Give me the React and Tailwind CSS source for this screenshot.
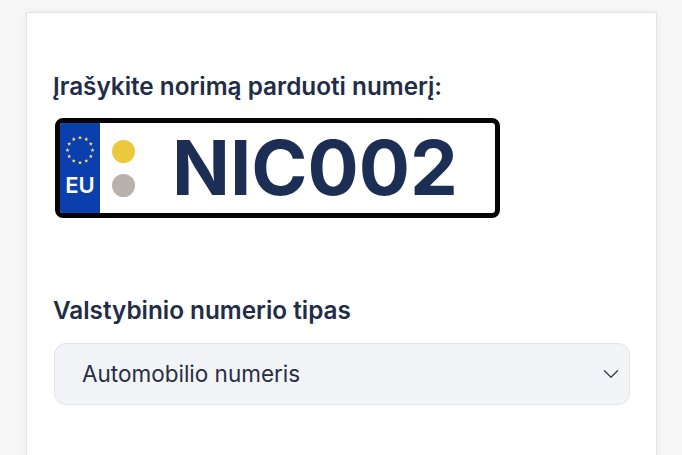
import React from 'react';
import { ChevronDown } from 'lucide-react';

const STARS = Array.from({ length: 12 }, (_, i) => {
  const a = (i * Math.PI) / 6;
  return { x: 16 + 12.5 * Math.sin(a), y: 16 - 12.5 * Math.cos(a) };
});

const EuStars = () => (
  <svg width="32" height="32" viewBox="0 0 32 32" className="block">
    {STARS.map((s, i) => (
      <polygon
        key={i}
        transform={`translate(${s.x} ${s.y}) scale(1.25)`}
        fill="#f3e36a"
        points="0,-1.7 0.5,-0.5 1.7,-0.5 0.7,0.3 1.1,1.5 0,0.8 -1.1,1.5 -0.7,0.3 -1.7,-0.5 -0.5,-0.5"
      />
    ))}
  </svg>
);

const Plate = ({ number }) => (
  <div className="flex w-[445px] h-[100px] border-[5px] border-[#050505] rounded-lg bg-white overflow-hidden">
    <div className="w-[40px] bg-[#0b3fae] flex flex-col items-center pt-[11px]">
      <EuStars />
      <span className="mt-[7px] text-[22px] leading-[24px] font-semibold text-white">EU</span>
    </div>
    <div className="w-[46px] flex flex-col items-center pt-[17px] gap-[11px]">
      <div className="w-[23px] h-[23px] rounded-full bg-[#ecc83c]" />
      <div className="w-[23px] h-[23px] rounded-full bg-[#b8b2ae]" />
    </div>
    <div className="pl-[26px] text-[76px] leading-[89px] font-bold text-[#1c2e54]">{number}</div>
  </div>
);

export default function App() {
  return (
    <div className="h-[455px] overflow-hidden bg-[#f7f7f7] pt-[12px] pl-[26px] font-['Inter',sans-serif]">
      <div className="w-[631px] h-[460px] bg-white border border-[#e3e3e3] shadow-[0_0_10px_rgba(0,0,0,0.05)] px-[27px] pt-[56px]">
        <h2 className="-ml-[1px] text-[24.3px] leading-[34px] font-semibold text-[#1f2d47] mb-[15px]">Įrašykite norimą parduoti numerį:</h2>
        <div className="ml-[1px]"><Plate number="NIC002" /></div>
        <h2 className="-ml-[1px] mt-[75px] text-[24.3px] leading-[34px] font-semibold text-[#1f2d47]">Valstybinio numerio tipas</h2>
        <div className="mt-[16px] w-[576px] h-[62px] bg-[#f3f4f8] border border-[#e2e4ea] rounded-xl flex items-center justify-between pl-[27px] pr-[3px]">
          <span className="text-[22.5px] text-[#252f45]">Automobilio numeris</span>
          <ChevronDown size={26} strokeWidth={1.3} className="text-[#3d4352] mr-[2px]" />
        </div>
      </div>
    </div>
  );
}
